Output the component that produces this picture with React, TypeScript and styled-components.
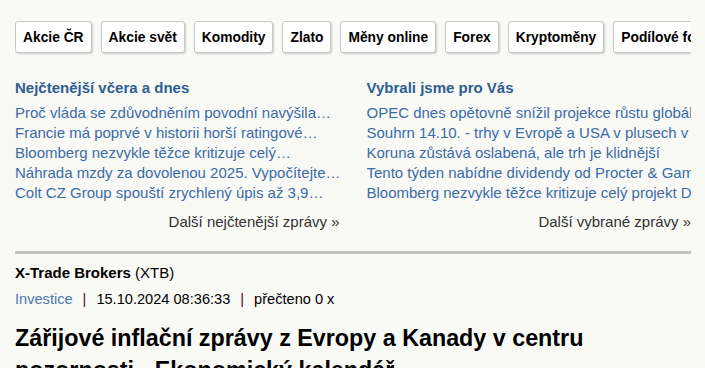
import React from 'react';
import styled, { createGlobalStyle } from 'styled-components';

const GlobalStyle = createGlobalStyle`
  body {
    margin: 0;
    background: #f9f9f6;
    font-family: "Liberation Sans", Arial, sans-serif;
    color: #000;
  }
`;

const Page = styled.div`
  width: 676px;
  padding: 21px 14px 0 15px;
  overflow: hidden;
`;

const Nav = styled.nav`
  display: flex;
  gap: 9px;
  overflow: hidden;
  padding-bottom: 3px;
  margin-bottom: -3px;
`;

const NavButton = styled.a`
  flex: none;
  display: flex;
  align-items: center;
  height: 30px;
  padding: 0 7px;
  background: #fff;
  border: 1px solid #c8c8c8;
  border-radius: 3px;
  box-shadow: 1px 1px 2px rgba(0, 0, 0, 0.18);
  font-size: 13.8px;
  font-weight: bold;
  color: #000;
  white-space: nowrap;
`;

const Columns = styled.div`
  display: grid;
  grid-template-columns: 1fr 1fr;
  column-gap: 27px;
  margin-top: 25px;
`;

const Column = styled.section`
  min-width: 0;
`;

const ColumnTitle = styled.h3`
  margin: 0 0 5px;
  font-size: 15px;
  line-height: 20px;
  font-weight: bold;
  color: #2e5d91;
`;

const LinkList = styled.ul`
  list-style: none;
  margin: 0;
  padding: 0;
`;

const LinkItem = styled.li`
  font-size: 15px;
  line-height: 20px;
  color: #3a6ca6;
  white-space: nowrap;
  overflow: hidden;
`;

const MoreLink = styled.div`
  margin-top: 9px;
  text-align: right;
  font-size: 15px;
  line-height: 20px;
  color: #333;
`;

const Divider = styled.hr`
  margin: 19px 0 0;
  border: none;
  height: 3px;
  background: #c2c2c2;
`;

const Source = styled.div`
  margin-top: 10px;
  font-size: 15px;
  line-height: 18px;
  b {
    font-weight: bold;
  }
`;

const Meta = styled.div`
  display: flex;
  gap: 10px;
  margin-top: 8px;
  font-size: 14.6px;
  line-height: 18px;
  color: #000;
`;

const MetaCategory = styled.span`
  color: #4c78ad;
`;

const MetaSep = styled.span`
  color: #4a0f1c;
`;

const Title = styled.h1`
  margin: 14px 0 0;
  font-size: 23.3px;
  line-height: 32px;
  font-weight: bold;
`;

const navItems = ['Akcie ČR', 'Akcie svět', 'Komodity', 'Zlato', 'Měny online', 'Forex', 'Kryptoměny', 'Podílové fondy'];

const mostRead = [
  'Proč vláda se zdůvodněním povodní navýšila…',
  'Francie má poprvé v historii horší ratingové…',
  'Bloomberg nezvykle těžce kritizuje celý…',
  'Náhrada mzdy za dovolenou 2025. Vypočítejte…',
  'Colt CZ Group spouští zrychlený úpis až 3,9…',
];

const picked = [
  'OPEC dnes opětovně snížil projekce růstu globální poptávky',
  'Souhrn 14.10. - trhy v Evropě a USA v plusech v očekávání',
  'Koruna zůstává oslabená, ale trh je klidnější',
  'Tento týden nabídne dividendy od Procter & Gamble',
  'Bloomberg nezvykle těžce kritizuje celý projekt Dukovany',
];

const App: React.FC = () => (
  <>
    <GlobalStyle />
    <Page>
      <Nav>
        {navItems.map((n) => <NavButton key={n}>{n}</NavButton>)}
      </Nav>
      <Columns>
        <Column>
          <ColumnTitle>Nejčtenější včera a dnes</ColumnTitle>
          <LinkList>
            {mostRead.map((t) => <LinkItem key={t}>{t}</LinkItem>)}
          </LinkList>
          <MoreLink>Další nejčtenější zprávy »</MoreLink>
        </Column>
        <Column>
          <ColumnTitle>Vybrali jsme pro Vás</ColumnTitle>
          <LinkList>
            {picked.map((t) => <LinkItem key={t}>{t}</LinkItem>)}
          </LinkList>
          <MoreLink>Další vybrané zprávy »</MoreLink>
        </Column>
      </Columns>
      <Divider />
      <Source><b>X-Trade Brokers</b> (XTB)</Source>
      <Meta>
        <MetaCategory>Investice</MetaCategory>
        <MetaSep>|</MetaSep>
        <span>15.10.2024 08:36:33</span>
        <MetaSep>|</MetaSep>
        <span>přečteno 0 x</span>
      </Meta>
      <Title>Zářijové inflační zprávy z Evropy a Kanady v centru pozornosti - Ekonomický kalendář</Title>
    </Page>
  </>
);

export default App;
